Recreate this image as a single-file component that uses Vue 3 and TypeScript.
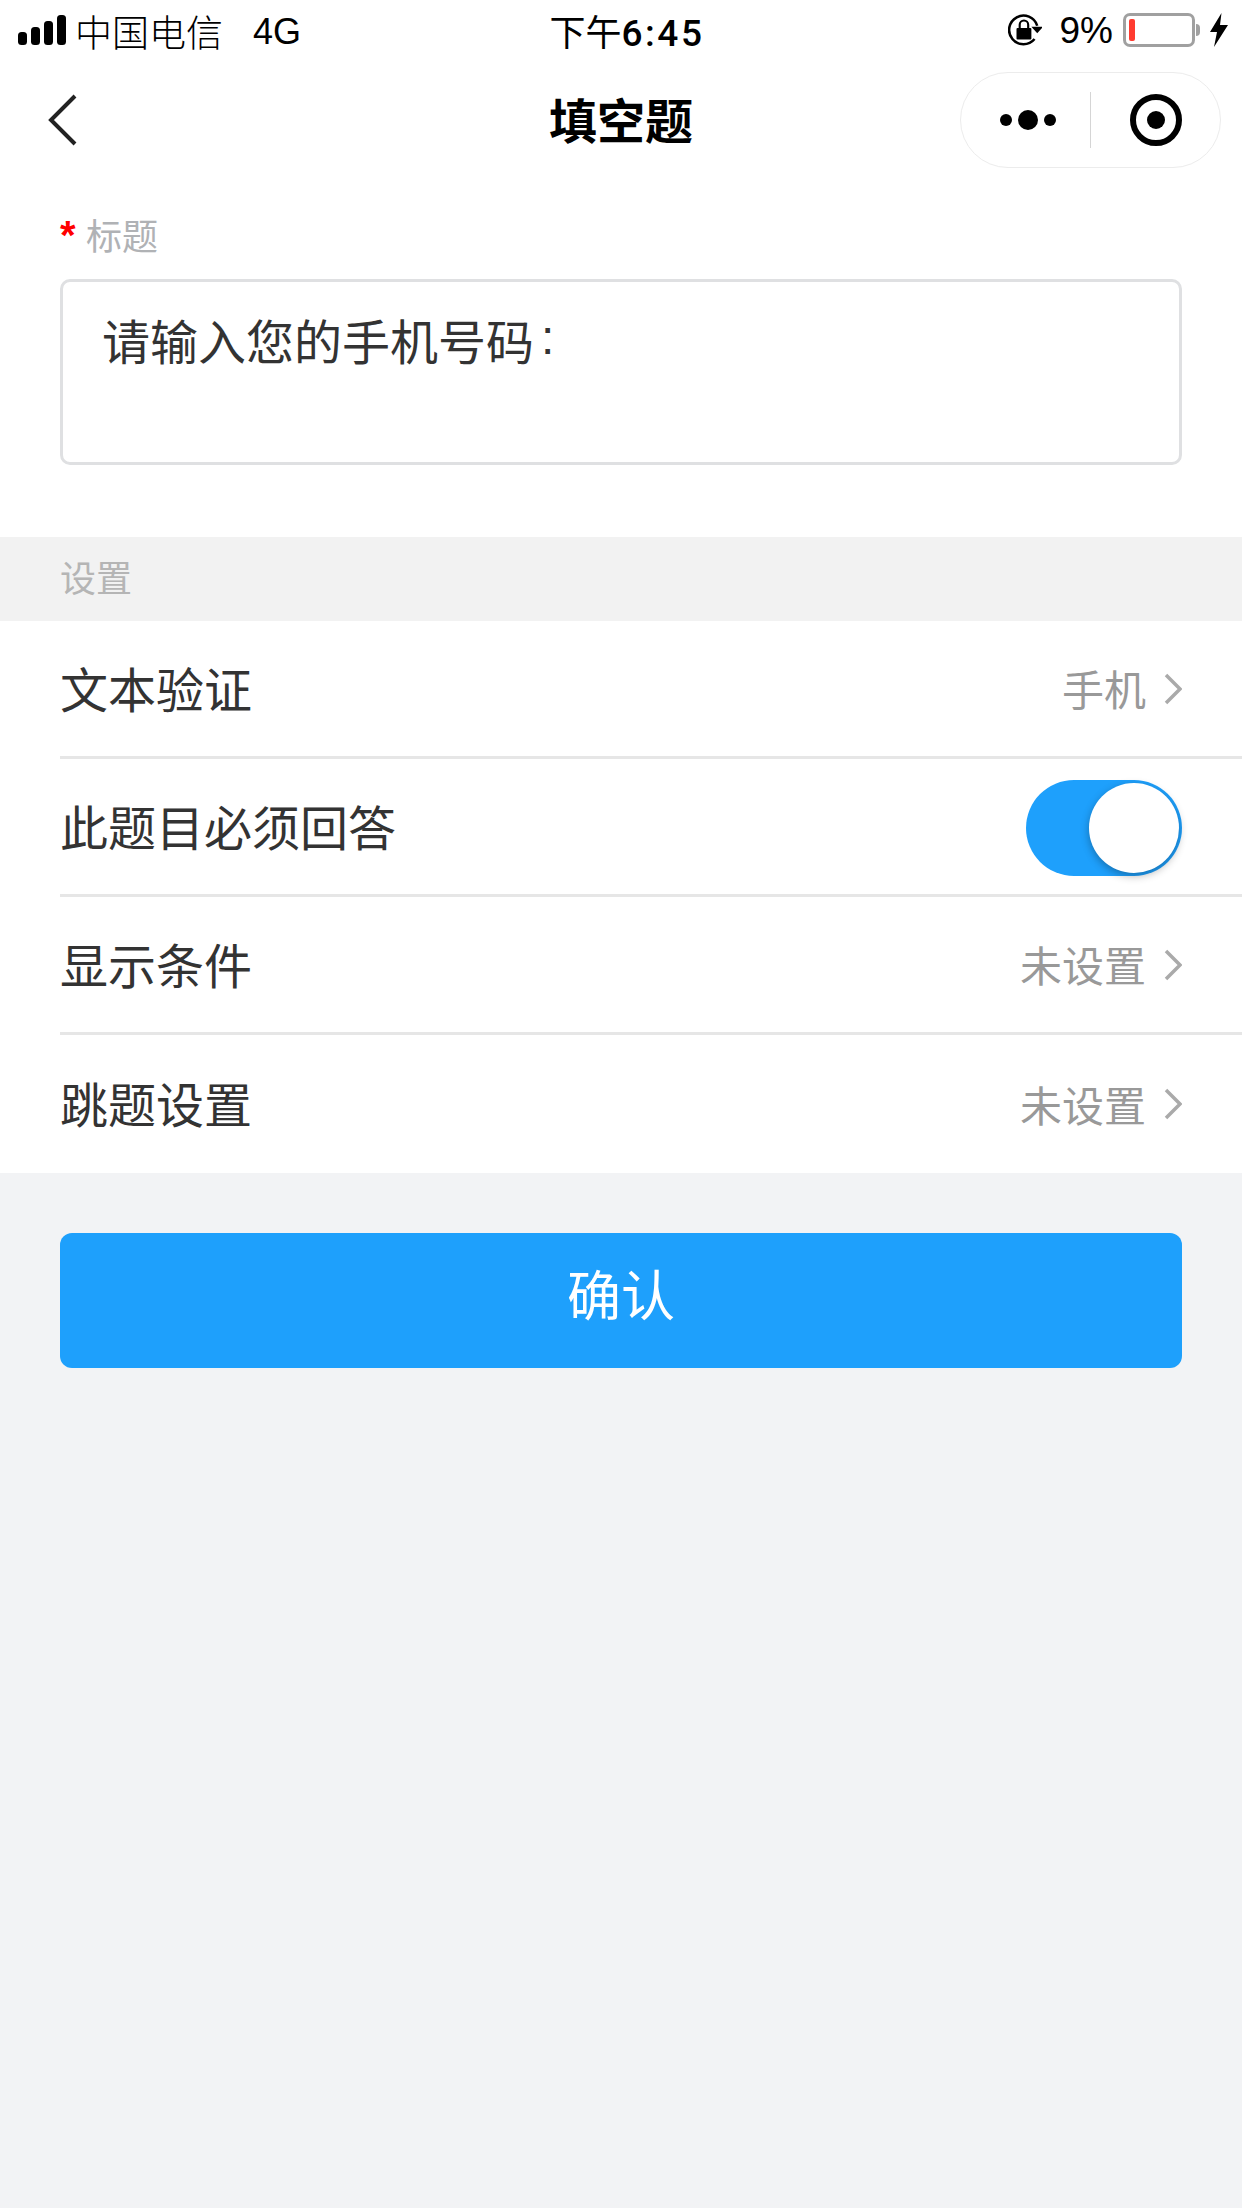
<script setup lang="ts">
const rows = [
  { label: '文本验证', value: '手机' },
  { label: '此题目必须回答', toggle: true },
  { label: '显示条件', value: '未设置' },
  { label: '跳题设置', value: '未设置' },
]
</script>

<template>
  <div class="page">
    <div class="status-bar">
      <div class="status-left">
        <svg class="signal" width="50" height="30" viewBox="0 0 50 30">
          <rect x="0" y="17" width="9" height="13" rx="3.5" />
          <rect x="13" y="12" width="9" height="18" rx="3.5" />
          <rect x="26" y="6" width="9" height="24" rx="3.5" />
          <rect x="39" y="0" width="9" height="30" rx="3.5" />
        </svg>
        <span class="carrier">中国电信</span>
        <span class="network">4G</span>
      </div>
      <div class="status-time">下午<span class="digits">6:45</span></div>
      <div class="status-right">
        <svg width="34" height="34" viewBox="0 0 32 32" class="lock">
          <path d="M25 24.500A13.500 13.500 0 1 1 27.500 12" fill="none" stroke="#000" stroke-width="2.400" />
          <path d="M22 13h11l-5.500 6z" />
          <rect x="8" y="14" width="14" height="11" rx="1" />
          <path d="M11 15v-4a4 4 0 0 1 8 0v4" fill="none" stroke="#000" stroke-width="2" />
        </svg>
        <span class="percent">9%</span>
        <div class="battery"><div class="battery-level"></div></div>
        <div class="battery-tip"></div>
        <svg width="18" height="34" viewBox="0 0 18 34" class="bolt">
          <path d="M11.500 0L0 19h7L4 34 18 12h-8z" />
        </svg>
      </div>
    </div>

    <div class="nav-bar">
      <svg class="back" width="30" height="52" viewBox="0 0 30 52">
        <path d="M28 2L4 26l24 24" fill="none" stroke="#222" stroke-width="4" />
      </svg>
      <h1 class="nav-title">填空题</h1>
      <div class="capsule">
        <div class="capsule-side capsule-menu">
          <span class="dot"></span>
          <span class="dot dot-big"></span>
          <span class="dot"></span>
        </div>
        <div class="capsule-line"></div>
        <div class="capsule-side">
          <div class="record"><div class="record-core"></div></div>
        </div>
      </div>
    </div>

    <section class="title-section">
      <div class="field-label"><span class="required">*</span>标题</div>
      <div class="title-box">请输入您的手机号码<span class="colon">:</span></div>
    </section>

    <div class="section-head">设置</div>

    <div class="settings">
      <div v-for="row in rows" :key="row.label" class="row">
        <span class="row-label">{{ row.label }}</span>
        <div v-if="row.toggle" class="switch"><div class="knob"></div></div>
        <div v-else class="row-right">
          <span class="row-value">{{ row.value }}</span>
          <svg width="18" height="32" viewBox="0 0 18 32">
            <path d="M2 2l14 14L2 30" fill="none" stroke="#aaa" stroke-width="3.500" />
          </svg>
        </div>
      </div>
    </div>

    <button class="confirm">确认</button>
  </div>
</template>

<style>
html,
body {
  margin: 0;
  background: #f2f3f5;
}
</style>

<style scoped>
.page {
  width: 1242px;
  height: 2208px;
  background: #f2f3f5;
  font-family: "Liberation Sans", "Noto Sans CJK SC", sans-serif;
  overflow: hidden;
}

.status-bar {
  height: 60px;
  background: #fff;
  display: grid;
  grid-template-columns: 1fr auto 1fr;
  align-items: center;
  padding: 0 14px 0 18px;
  color: #000;
  font-size: 36px;
}

.status-left,
.status-right {
  display: flex;
  align-items: center;
}

.status-right {
  justify-content: flex-end;
}

.carrier {
  margin-left: 7px;
  font-size: 37px;
  font-weight: 300;
  padding-top: 2px;
}

.network {
  margin-left: 30px;
  font-size: 36px;
  padding-top: 3px;
}

.status-time {
  padding-left: 8px;
}

.digits {
  font-family: Roboto, sans-serif;
  font-size: 37px;
  font-weight: 500;
  letter-spacing: 2.500px;
}

.lock {
  margin-right: 18px;
}

.percent {
  margin-right: 10px;
  font-size: 37px;
  padding-top: 2px;
}

.battery {
  width: 72px;
  height: 34px;
  box-sizing: border-box;
  border: 3px solid #a0a0a0;
  border-radius: 7px;
  padding: 3px;
}

.battery-level {
  width: 6px;
  height: 100%;
  background: #ff3b30;
  border-radius: 2px;
}

.battery-tip {
  width: 4px;
  height: 12px;
  margin: 0 10px 0 1px;
  background: #a0a0a0;
  border-radius: 0 4px 4px 0;
}

.nav-bar {
  height: 120px;
  background: #fff;
  display: flex;
  align-items: center;
  justify-content: space-between;
  position: relative;
  padding: 0 21px 0 47px;
}

.nav-title {
  position: absolute;
  left: 0;
  right: 0;
  margin: 0;
  padding-bottom: 4px;
  text-align: center;
  font-size: 48px;
  font-weight: 700;
  color: #000;
  pointer-events: none;
}

.capsule {
  width: 261px;
  height: 96px;
  box-sizing: border-box;
  border: 1.5px solid #ececec;
  border-radius: 48px;
  display: flex;
  align-items: center;
}

.capsule-side {
  flex: 1;
  display: flex;
  align-items: center;
  justify-content: center;
  gap: 6px;
}

.capsule-menu .dot:first-child {
  margin-left: 6px;
}

.capsule-line {
  width: 1.5px;
  height: 56px;
  background: #d5d5d5;
}

.dot {
  width: 12px;
  height: 12px;
  border-radius: 50%;
  background: #000;
}

.dot-big {
  width: 20px;
  height: 20px;
}

.record {
  width: 52px;
  height: 52px;
  box-sizing: border-box;
  border: 6px solid #000;
  border-radius: 50%;
  display: flex;
  align-items: center;
  justify-content: center;
}

.record-core {
  width: 18px;
  height: 18px;
  border-radius: 50%;
  background: #000;
}

.title-section {
  height: 357px;
  box-sizing: border-box;
  background: #fff;
  padding: 33px 60px 0;
}

.field-label {
  height: 66px;
  box-sizing: border-box;
  padding-top: 4px;
  font-size: 36px;
  line-height: 42px;
  color: #b0b2b5;
  display: flex;
}

.required {
  color: #f00;
  width: 26px;
  line-height: 36px;
  font-size: 40px;
  font-weight: 700;
}

.title-box {
  height: 186px;
  box-sizing: border-box;
  border: 3px solid #dfe0e2;
  border-radius: 10px;
  padding: 34px 39px;
  font-size: 48px;
  line-height: 56px;
  color: #333;
}

.colon {
  margin-left: 7px;
  position: relative;
  top: -6px;
}

.section-head {
  height: 84px;
  padding-left: 60px;
  background: #f2f2f2;
  font-size: 36px;
  line-height: 86px;
  color: #b5b5b5;
}

.settings {
  background: #fff;
  padding-left: 60px;
}

.row {
  height: 138px;
  box-sizing: border-box;
  display: flex;
  align-items: center;
  justify-content: space-between;
  padding-right: 60px;
  border-bottom: 3px solid #e6e6e6;
}

.row:last-child {
  border-bottom: none;
}

.row-label {
  font-size: 48px;
  color: #333;
  padding-bottom: 4px;
}

.row-right {
  display: flex;
  align-items: center;
  gap: 18px;
}

.row-value {
  font-size: 42px;
  color: #999;
  padding-bottom: 2px;
}

.switch {
  width: 156px;
  height: 96px;
  margin-top: 3px;
  box-sizing: border-box;
  background: #1ea0fc;
  border-radius: 48px;
  padding: 3px;
  display: flex;
  justify-content: flex-end;
}

.knob {
  width: 90px;
  height: 90px;
  border-radius: 50%;
  background: #fff;
  box-shadow: 0 3px 8px rgba(0, 0, 0, 0.3);
}

.confirm {
  display: block;
  width: 1122px;
  height: 135px;
  margin: 60px 60px 0;
  padding: 0 0 16px;
  border: none;
  border-radius: 12px;
  background: #1ea0fc;
  color: #fff;
  font-family: inherit;
  font-size: 54px;
}
</style>
